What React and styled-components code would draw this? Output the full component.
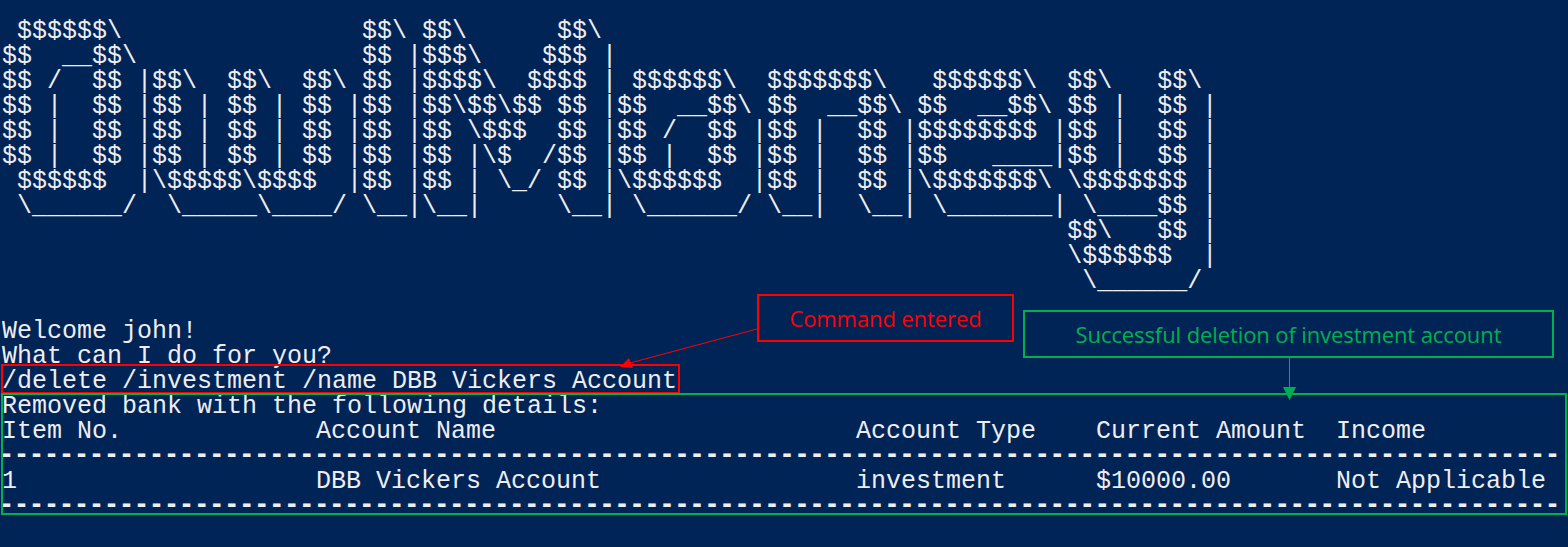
import React from 'react'
import styled, { createGlobalStyle } from 'styled-components'

const GlobalStyle = createGlobalStyle`
  html, body {
    margin: 0;
    padding: 0;
    background: #012456;
  }
`

const BANNER = [
  ' $$$$$$\\                $$\\ $$\\      $$\\',
  '$$  __$$\\               $$ |$$$\\    $$$ |',
  '$$ /  $$ |$$\\  $$\\  $$\\ $$ |$$$$\\  $$$$ | $$$$$$\\  $$$$$$$\\   $$$$$$\\  $$\\   $$\\',
  '$$ |  $$ |$$ | $$ | $$ |$$ |$$\\$$\\$$ $$ |$$  __$$\\ $$  __$$\\ $$  __$$\\ $$ |  $$ |',
  '$$ |  $$ |$$ | $$ | $$ |$$ |$$ \\$$$  $$ |$$ /  $$ |$$ |  $$ |$$$$$$$$ |$$ |  $$ |',
  '$$ |  $$ |$$ | $$ | $$ |$$ |$$ |\\$  /$$ |$$ |  $$ |$$ |  $$ |$$   ____|$$ |  $$ |',
  ' $$$$$$  |\\$$$$$\\$$$$  |$$ |$$ | \\_/ $$ |\\$$$$$$  |$$ |  $$ |\\$$$$$$$\\ \\$$$$$$$ |',
  ' \\______/  \\_____\\____/ \\__|\\__|     \\__| \\______/ \\__|  \\__| \\_______| \\____$$ |',
  ' '.repeat(71) + '$$\\   $$ |',
  ' '.repeat(71) + '\\$$$$$$  |',
  ' '.repeat(71) + ' \\______/',
].join('\n')

const DASHES = '-'.repeat(104)

const App = () => {
  return (
    <>
      <GlobalStyle />
      <Screen>
        <Console>
          <Banner>{BANNER}</Banner>
          <Line>Welcome john!</Line>
          <Line>What can I do for you?</Line>
          <Line>/delete /investment /name DBB Vickers Account</Line>
          <Line>Removed bank with the following details:</Line>
          <TableRow>
            <span>Item No.</span>
            <span>Account Name</span>
            <span>Account Type</span>
            <span>Current Amount</span>
            <span>Income</span>
          </TableRow>
          <DashLine>{DASHES}</DashLine>
          <TableRow>
            <span>1</span>
            <span>DBB Vickers Account</span>
            <span>investment</span>
            <span>$10000.00</span>
            <span>Not Applicable</span>
          </TableRow>
          <DashLine>{DASHES}</DashLine>
        </Console>

        <Highlight $color='#ff0000' $left={1} $top={364} $width={679} $height={30} />
        <Highlight $color='#00b050' $left={1} $top={393} $width={1566} $height={122} />

        <Callout $color='#ff0000' $left={757} $top={294} $width={257} $height={48}>
          Command entered
        </Callout>
        <Callout $color='#00b050' $left={1023} $top={310} $width={531} $height={48}>
          Successful deletion of investment account
        </Callout>

        <Arrows viewBox='0 0 1568 547'>
          <line x1='757' y1='329' x2='630' y2='363' stroke='#ff0000' strokeWidth='1' />
          <polygon points='620,367 629,358 633,368' fill='#ff0000' />
          <line x1='1289.5' y1='358' x2='1289.5' y2='388' stroke='#00b050' strokeWidth='1' />
          <polygon points='1289.5,400 1283,387 1296,387' fill='#00b050' />
        </Arrows>
      </Screen>
    </>
  )
}
export default App

const Screen = styled.main`
  position: relative;
  width: 1568px;
  height: 547px;
  overflow: hidden;
  background: #012456;
`

const Console = styled.div`
  display: flex;
  flex-direction: column;
  padding: 19px 0 0 2px;
  color: #eeedf0;
  font-family: "Liberation Mono", monospace;
  font-size: 25px;
  line-height: 25px;
`

const Banner = styled.pre`
  margin: 0 0 25px 0;
  font: inherit;
  white-space: pre;
`

const Line = styled.div`
  height: 25px;
  white-space: pre;
`

// the console's hyphens are short, so the rule uses a narrower hyphen on the same 15px pitch
const DashLine = styled(Line)`
  font-family: "Open Sans", sans-serif;
  font-size: 28px;
  font-weight: 700;
  line-height: 17px;
  letter-spacing: 6px;
`

const TableRow = styled.div`
  display: grid;
  grid-template-columns: 314px 540px 240px 240px 1fr;
  height: 25px;
  white-space: pre;
`

const Highlight = styled.div`
  position: absolute;
  left: ${p => p.$left}px;
  top: ${p => p.$top}px;
  width: ${p => p.$width}px;
  height: ${p => p.$height}px;
  box-sizing: border-box;
  border: 2px solid ${p => p.$color};
`

const Callout = styled(Highlight)`
  display: flex;
  align-items: center;
  justify-content: center;
  color: ${p => p.$color};
  font-family: "Open Sans", sans-serif;
  font-size: 22px;
  letter-spacing: -0.1px;
`

const Arrows = styled.svg`
  position: absolute;
  inset: 0;
  width: 100%;
  height: 100%;
  pointer-events: none;
`
